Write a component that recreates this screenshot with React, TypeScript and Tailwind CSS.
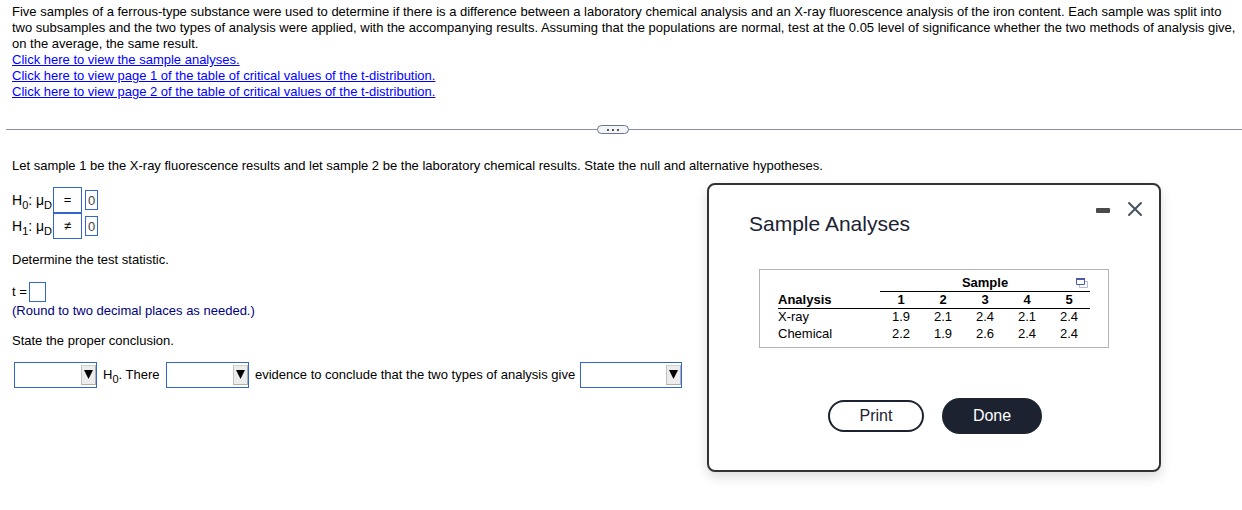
import React, { useState } from "react";

const links = [
  "Click here to view the sample analyses.",
  "Click here to view page 1 of the table of critical values of the t-distribution.",
  "Click here to view page 2 of the table of critical values of the t-distribution.",
];

const hypotheses = [
  { sub: "0", sign: "=" },
  { sub: "1", sign: "≠" },
];

const samples = [
  { name: "X-ray", values: ["1.9", "2.1", "2.4", "2.1", "2.4"] },
  { name: "Chemical", values: ["2.2", "1.9", "2.6", "2.4", "2.4"] },
];

const Sub = ({ children }: { children: React.ReactNode }) => (
  <sub className="relative top-1 align-baseline text-[11px] leading-none">
    {children}
  </sub>
);

const Dropdown = ({
  label,
  className,
  options,
}: {
  label: string;
  className: string;
  options: string[];
}) => (
  <div className={`relative h-[26px] shrink-0 ${className}`}>
    <select
      aria-label={label}
      defaultValue=""
      className="h-full w-full appearance-none border border-[#3366cc] bg-white pl-1 pr-5"
    >
      <option value=""></option>
      {options.map((option) => (
        <option key={option}>{option}</option>
      ))}
    </select>
    <span className="pointer-events-none absolute right-px top-[3px] flex h-5 w-[15px] justify-center border border-t-[#d0d0d0] border-l-[#c0c0c0] border-r-[#b0b0b0] border-b-[#b0b0b0] bg-[#ececec] pt-1">
      <svg width="9" height="9" viewBox="0 0 9 9">
        <path d="M0 0h9L4.5 9z" fill="#000" />
      </svg>
    </span>
  </div>
);

const SampleDialog = ({ onClose }: { onClose: () => void }) => {
  const [minimized, setMinimized] = useState(false);

  return (
    <div
      role="dialog"
      aria-labelledby="dialog-title"
      className="absolute right-[81px] top-[183px] w-[454px] rounded-lg border-2 border-[#333] bg-white pb-9 pl-10 pr-4 pt-4 shadow-[0_5px_12px_rgba(0,0,0,0.14)]"
    >
      <div className="flex justify-between">
        <h2
          id="dialog-title"
          className="pt-2 text-[21px] leading-[30px] text-[#1c2233]"
        >
          Sample Analyses
        </h2>
        <div className="flex h-4 items-center gap-[17px]">
          <button
            aria-label="Minimize"
            onClick={() => setMinimized(!minimized)}
            className="flex h-4 items-center pt-[3px]"
          >
            <svg width="14" height="5" viewBox="0 0 14 5">
              <rect width="14" height="5" rx="1" fill="#4a4a4a" />
            </svg>
          </button>
          <button aria-label="Close" onClick={onClose}>
            <svg width="16" height="16" viewBox="0 0 16 16">
              <path
                d="M2 2l12 12M14 2L2 14"
                stroke="#46525f"
                strokeWidth="2"
                strokeLinecap="round"
              />
            </svg>
          </button>
        </div>
      </div>
      {!minimized && (
        <>
          <div className="relative ml-[10px] mt-[30px] w-[350px] border border-[#b4b4b4] px-[18px] pb-1 pt-[5px]">
            <table className="w-full table-fixed border-separate border-spacing-0 text-center leading-4">
              <colgroup>
                <col className="w-[102px]" />
                <col span={5} />
              </colgroup>
              <thead>
                <tr>
                  <td className="p-0"></td>
                  <th colSpan={5} className="border-b border-black p-0">
                    Sample
                  </th>
                </tr>
                <tr>
                  <th className="border-b border-black p-0 text-left">
                    Analysis
                  </th>
                  {[1, 2, 3, 4, 5].map((n) => (
                    <th key={n} className="border-b border-black p-0">
                      {n}
                    </th>
                  ))}
                </tr>
              </thead>
              <tbody>
                {samples.map((row) => (
                  <tr key={row.name} className="h-[17px] align-top">
                    <td className="p-0 text-left">{row.name}</td>
                    {row.values.map((value, index) => (
                      <td key={index} className="p-0">
                        {value}
                      </td>
                    ))}
                  </tr>
                ))}
              </tbody>
            </table>
            <button
              aria-label="Open data in a new window"
              className="absolute right-5 top-2"
            >
              <svg width="12" height="10" viewBox="0 0 12 10" fill="none">
                <path d="M3.5 3.5h8v6h-8z" fill="#fff" stroke="#b3b9dc" />
                <path d="M.5.5h8v6h-8z" fill="#fff" stroke="#4a5aa8" />
                <path d="M0 1h9" stroke="#4a5aa8" strokeWidth="2" />
              </svg>
            </button>
          </div>
          <div className="mr-[22px] mt-[50px] flex items-center justify-center gap-[18px] text-[16px]">
            <button className="h-8 w-24 rounded-full border-2 border-[#1c2230] text-[#1c2230]">
              Print
            </button>
            <button
              onClick={onClose}
              className="h-9 w-[100px] rounded-full bg-[#1c2230] text-white"
            >
              Done
            </button>
          </div>
        </>
      )}
    </div>
  );
};

const App = () => {
  const [open, setOpen] = useState(true);

  return (
    <main className="relative min-h-screen bg-white pt-1 font-['Liberation_Sans',Arial,sans-serif] text-[13px] leading-4 text-black">
      <section className="pl-3 pr-1">
        <p>
          Five samples of a ferrous-type substance were used to determine if
          there is a difference between a laboratory chemical analysis and an
          X-ray fluorescence analysis of the iron content. Each sample was split
          into two subsamples and the two types of analysis were applied, with
          the accompanying results. Assuming that the populations are normal,
          test at the 0.05 level of significance whether the two methods of
          analysis give, on the average, the same result.
        </p>
        {links.map((text, index) => (
          <div key={text}>
            <a
              href="#"
              onClick={() => index === 0 && setOpen(true)}
              className="text-[#0000ff] underline"
            >
              {text}
            </a>
          </div>
        ))}
      </section>

      <div className="ml-1.5 mt-[25px] flex items-center">
        <span className="h-px w-[591px] bg-[#8c8ca5]"></span>
        <button
          aria-label="Expand"
          className="flex h-[9px] w-8 items-center justify-center gap-[3px] rounded-full border border-[#6b7590] bg-[#f3f6f6]"
        >
          <span className="h-0.5 w-0.5 bg-[#555]"></span>
          <span className="h-0.5 w-0.5 bg-[#555]"></span>
          <span className="h-0.5 w-0.5 bg-[#555]"></span>
        </button>
        <span className="h-px flex-1 bg-[#8c8ca5]"></span>
      </div>

      <section className="pl-3 pt-6">
        <p>
          Let sample 1 be the X-ray fluorescence results and let sample 2 be the
          laboratory chemical results. State the null and alternative
          hypotheses.
        </p>
        <div className="mt-[13px]">
          {hypotheses.map((row) => (
            <div key={row.sub} className="flex h-[26px] items-center">
              <span className="w-[41px] whitespace-nowrap text-[14px]">
                H<Sub>{row.sub}</Sub>: μ<Sub>D</Sub>
              </span>
              <select
                aria-label={`Relation for H${row.sub}`}
                defaultValue={row.sign}
                className="h-[26px] w-[29px] appearance-none border border-[#3366cc] bg-white text-center [text-align-last:center]"
              >
                <option>=</option>
                <option>≠</option>
                <option>&lt;</option>
                <option>&gt;</option>
              </select>
              <input
                aria-label={`Value for H${row.sub}`}
                defaultValue="0"
                className="ml-[3px] h-5 w-[13px] border border-[#3366cc] text-center text-[#444]"
              />
            </div>
          ))}
        </div>
        <p className="mt-[13px]">Determine the test statistic.</p>
        <div className="mt-[14px] flex items-center">
          <label htmlFor="statistic" className="w-[17px] whitespace-nowrap">
            t =
          </label>
          <input
            id="statistic"
            className="h-5 w-[17px] border border-[#3366cc]"
          />
        </div>
        <p className="mt-px text-[#000080]">
          (Round to two decimal places as needed.)
        </p>
        <p className="mt-[14px]">State the proper conclusion.</p>
        <div className="mt-[13px] flex items-center pl-0.5">
          <Dropdown
            label="Decision"
            className="w-[83px]"
            options={["Reject", "Do not reject"]}
          />
          <span className="w-[69px] whitespace-nowrap pl-1.5">
            H<Sub>0</Sub>. There
          </span>
          <Dropdown
            label="Evidence"
            className="w-[83px]"
            options={["is", "is not"]}
          />
          <span className="w-[331px] whitespace-nowrap pl-1.5">
            evidence to conclude that the two types of analysis give
          </span>
          <Dropdown
            label="Results"
            className="w-[102px]"
            options={["the same result", "different results"]}
          />
        </div>
      </section>

      {open && <SampleDialog onClose={() => setOpen(false)} />}
    </main>
  );
};

export default App;
